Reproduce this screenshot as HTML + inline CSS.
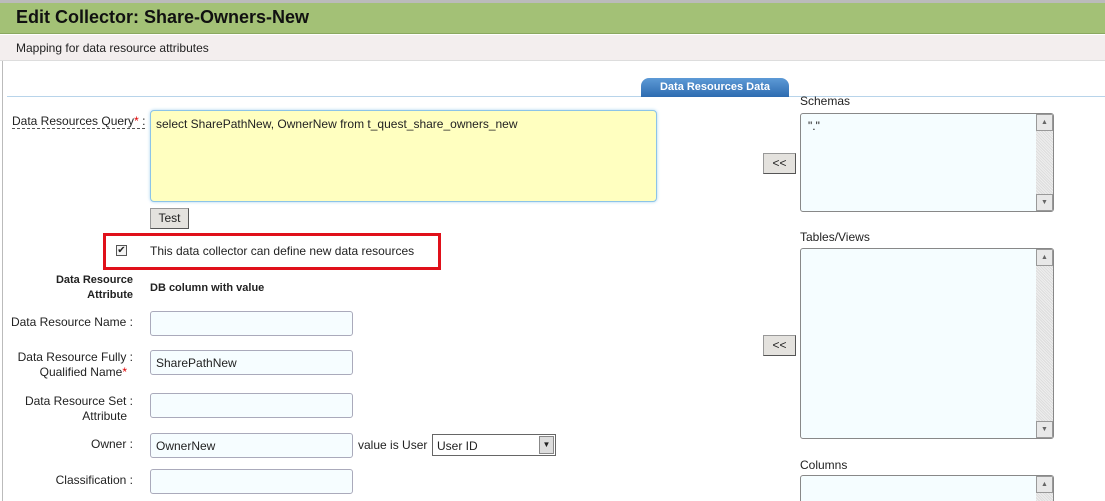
<!DOCTYPE html>
<html style="overflow:hidden"><head><style>
*{box-sizing:border-box}
html,body{overflow:hidden}
body{margin:0;width:1105px;height:501px;overflow:hidden;background:#fff;font-family:"Liberation Sans",sans-serif;font-size:12px;color:#222;position:relative}
.a{position:absolute}
.inp{position:absolute;left:150px;width:203px;height:25px;border:1px solid #aab;border-radius:3px;background:#f6fdff;padding:5px 5px;font-size:12px}
.lbl{position:absolute;right:972px;text-align:right;font-size:12px;line-height:15px}
.btn{position:absolute;background:#e4e2de;border:1px solid #999;border-right-color:#555;border-bottom-color:#555;font-size:12px;text-align:center}
.ta{position:absolute;left:800px;width:254px;border:1px solid #888;border-radius:3px;background:#f5fdff;overflow:hidden}
.sb{position:absolute;right:0;top:0;bottom:0;width:17px;background:repeating-linear-gradient(45deg,#ddd 0 1px,#eee 1px 2px)}
.sbb{position:absolute;left:0;width:17px;height:17px;background:#e8e8e8;border:1px solid #999;font-size:7px;text-align:center;line-height:15px;color:#666}
</style></head><body>
<div class="a" style="left:0;top:0;width:1105px;height:3px;background:#bbb"></div>
<div class="a" style="left:0;top:3px;width:1105px;height:31px;background:#a3c176;border-bottom:1px solid #8aa860"></div>
<div class="a" style="left:16px;top:7px;font-size:18px;font-weight:bold;color:#111;font-family:'Liberation Sans',sans-serif">Edit Collector: Share-Owners-New</div>
<div class="a" style="left:0;top:35px;width:1105px;height:26px;background:#f3eeee;border-bottom:1px solid #ddd"></div>
<div class="a" style="left:16px;top:41px">Mapping for data resource attributes</div>
<div class="a" style="left:2px;top:61px;width:1px;height:440px;background:#bbb"></div>
<div class="a" style="left:7px;top:96px;width:1098px;height:1px;background:#b8d4ea"></div>
<div class="a" style="left:641px;top:78px;width:148px;height:19px;background:linear-gradient(#5d9ad6,#2d6bb0);border-radius:8px 8px 0 0;color:#fff;font-weight:bold;font-size:11px;text-align:center;line-height:19px">Data Resources Data</div>
<div class="a" style="left:12px;top:114px;border-bottom:1px dashed #555">Data Resources Query<span style="color:#d00">*</span> :</div>
<div class="a" style="left:150px;top:110px;width:507px;height:92px;background:#ffffc0;border:1px solid #8cc4e8;border-radius:4px;box-shadow:0 0 3px #aad4f0;padding:6px 5px">select SharePathNew, OwnerNew from t_quest_share_owners_new</div>
<div class="btn" style="left:150px;top:208px;width:39px;height:21px;line-height:19px">Test</div>
<div class="a" style="left:103px;top:233px;width:338px;height:37px;border:3px solid #e0101a"></div>
<div class="a" style="left:116px;top:245px;width:11px;height:11px;border:1px solid #555;background:#f4f4f4;font-size:10px;line-height:9px;text-align:center">✔</div>
<div class="a" style="left:150px;top:244px">This data collector can define new data resources</div>
<div class="lbl" style="top:273px;font-weight:bold;font-size:11px">Data Resource<br>Attribute</div>
<div class="a" style="left:150px;top:282px;font-weight:bold;font-size:11px">DB column with value</div>
<div class="lbl" style="top:315px;right:972px">Data Resource Name :</div>
<div class="inp" style="top:311px"></div>
<div class="lbl" style="top:350px;right:972px">Data Resource Fully :</div>
<div class="lbl" style="top:365px;right:978px">Qualified Name<span style="color:#d00">*</span></div>
<div class="inp" style="top:350px">SharePathNew</div>
<div class="lbl" style="top:394px;right:972px">Data Resource Set :</div>
<div class="lbl" style="top:409px;right:978px">Attribute</div>
<div class="inp" style="top:393px"></div>
<div class="lbl" style="top:437px;right:972px">Owner :</div>
<div class="inp" style="top:433px">OwnerNew</div>
<div class="a" style="left:358px;top:438px">value is User</div>
<div class="a" style="left:432px;top:434px;width:124px;height:22px;border:1px solid #666;background:#fff;padding:4px 4px">User ID<div class="a" style="right:1px;top:1px;width:15px;height:18px;background:#ddd;border:1px solid #888;font-size:8px;text-align:center;line-height:16px">▼</div></div>
<div class="lbl" style="top:473px;right:972px">Classification :</div>
<div class="inp" style="top:469px"></div>
<div class="a" style="left:800px;top:94px">Schemas</div>
<div class="ta" style="top:113px;height:99px;padding:5px 7px">"."<div class="sb"><div class="sbb" style="top:0">▲</div><div class="sbb" style="bottom:0">▼</div></div></div>
<div class="btn" style="left:763px;top:153px;width:33px;height:21px;line-height:19px">&lt;&lt;</div>
<div class="a" style="left:800px;top:230px">Tables/Views</div>
<div class="ta" style="top:248px;height:191px"><div class="sb"><div class="sbb" style="top:0">▲</div><div class="sbb" style="bottom:0">▼</div></div></div>
<div class="btn" style="left:763px;top:335px;width:33px;height:21px;line-height:19px">&lt;&lt;</div>
<div class="a" style="left:800px;top:458px">Columns</div>
<div class="ta" style="top:475px;height:26px;border-bottom:none;border-radius:3px 3px 0 0"><div class="sb"><div class="sbb" style="top:0">▲</div></div></div>
</body></html>
